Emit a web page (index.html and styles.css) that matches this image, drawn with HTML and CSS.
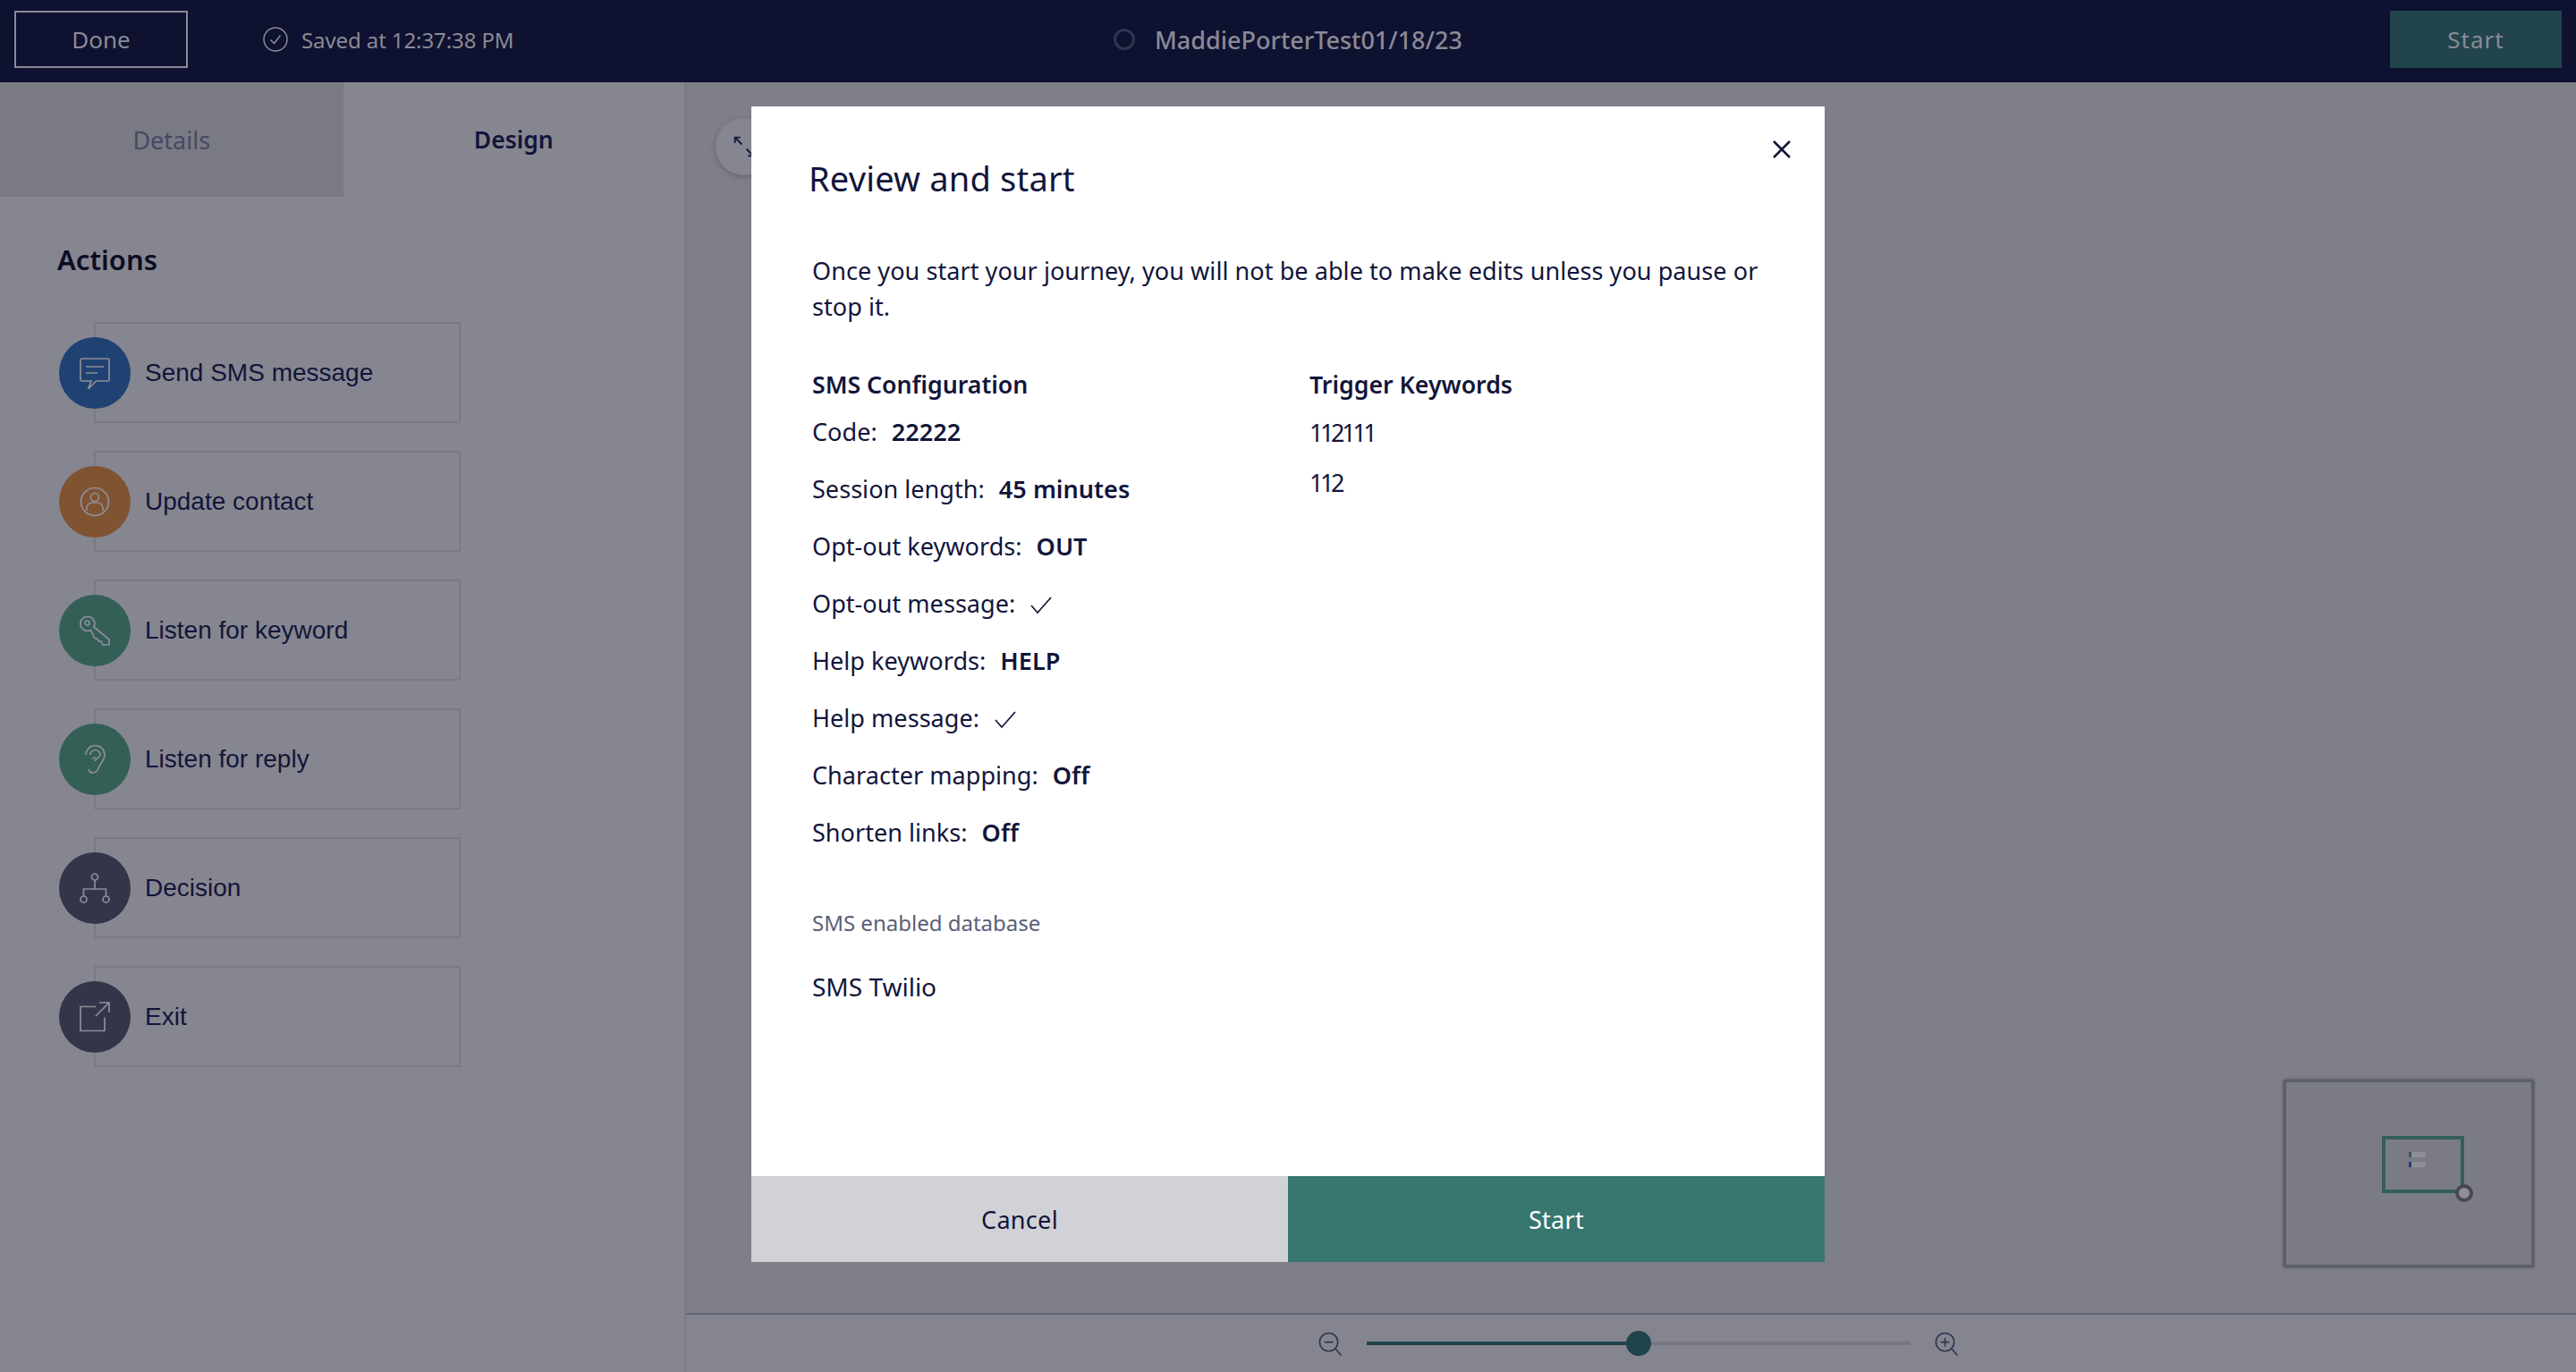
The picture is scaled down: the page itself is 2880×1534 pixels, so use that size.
FILE: index.html
```html
<!DOCTYPE html>
<html lang="en">
<head>
    <meta charset="UTF-8">
    <meta name="viewport" content="width=device-width, initial-scale=1.0">
    <title>Review and start</title>
    <link rel="stylesheet" href="styles.css">
</head>
<body>
    <header class="topbar">
        <button class="done-btn">Done</button>
        <div class="saved">
            <svg class="saved-icon" viewBox="0 0 28 28"><circle cx="14" cy="14" r="13"/><path d="M8.5 14.5l4 4 7-9"/></svg>
            <span>Saved at 12:37:38 PM</span>
        </div>
        <div class="journey-name">
            <span class="status-ring"></span>
            <span>MaddiePorterTest01/18/23</span>
        </div>
        <button class="top-start">Start</button>
    </header>

    <div class="workspace">
        <aside class="sidebar">
            <div class="tabs">
                <div class="tab tab-off">Details</div>
                <div class="tab tab-on">Design</div>
            </div>
            <h2 class="actions-title">Actions</h2>
            <ul class="actions">
                <li class="action">
                    <span class="badge badge-blue">
                        <svg viewBox="0 0 36 36"><path d="M3.5 2h29a1.5 1.5 0 0 1 1.500 1.500v22a1.500 1.500 0 0 1-1.500 1.500h-13l-9 9 3.500-9h-10.500a1.500 1.500 0 0 1-1.500-1.500v-22a1.500 1.500 0 0 1 1.500-1.500z"/><path d="M8 11h20M8 18h13"/></svg>
                    </span>
                    <span class="action-label">Send SMS message</span>
                </li>
                <li class="action">
                    <span class="badge badge-orange">
                        <svg viewBox="0 0 36 36"><circle cx="18" cy="18" r="15.500"/><circle cx="18" cy="13" r="4.500"/><path d="M9 28v-3a6 6 0 0 1 6-6h6a6 6 0 0 1 6 6v3"/></svg>
                    </span>
                    <span class="action-label">Update contact</span>
                </li>
                <li class="action">
                    <span class="badge badge-green">
                        <svg viewBox="0 0 36 36"><path d="M17 14L34 28V34H27L25 30H22L21 27H18L13.500 17.500A8 8 0 1 1 17 14Z"/><circle cx="9.500" cy="9.500" r="2.500"/></svg>
                    </span>
                    <span class="action-label">Listen for keyword</span>
                </li>
                <li class="action">
                    <span class="badge badge-green">
                        <svg viewBox="0 0 36 36"><path d="M8 13a10.500 10.500 0 0 1 21 0c0 6-4 8-6 13-1.500 4-3 7-7 7-3 0-4.500-1.500-5-4"/><path d="M13 13a5.500 5.500 0 0 1 11 0c0 3-5 3.500-6 7"/><path d="M15 17l4-1"/></svg>
                    </span>
                    <span class="action-label">Listen for reply</span>
                </li>
                <li class="action">
                    <span class="badge badge-navy">
                        <svg viewBox="0 0 36 36"><circle cx="18" cy="5.500" r="3.500"/><circle cx="5.500" cy="30.500" r="3.500"/><circle cx="30.500" cy="30.500" r="3.500"/><path d="M18 9v10M5.500 27v-8h25v8"/></svg>
                    </span>
                    <span class="action-label">Decision</span>
                </li>
                <li class="action">
                    <span class="badge badge-navy">
                        <svg viewBox="0 0 36 36"><path d="M19 6.500h-17v27h27v-15"/><path d="M19 17l15-15M23 2h11v11"/></svg>
                    </span>
                    <span class="action-label">Exit</span>
                </li>
            </ul>
        </aside>

        <main class="canvas">
            <button class="fit-btn">
                <svg viewBox="0 0 28 28"><path d="M2 2l9 9M2 9v-7h7M26 26l-9-9M26 19v7h-7"/></svg>
            </button>
            <div class="minimap">
                <div class="minimap-frame">
                    <span class="mini-node mini-green"></span>
                    <span class="mini-node mini-blue"></span>
                    <span class="minimap-handle"></span>
                </div>
            </div>
            <div class="zoombar">
                <svg class="zoom-icon" viewBox="0 0 28 28"><circle cx="12" cy="12" r="10.500"/><path d="M7 12h10M19.500 19.500l7 8"/></svg>
                <div class="slider"><span class="slider-fill"></span><span class="slider-thumb"></span></div>
                <svg class="zoom-icon" viewBox="0 0 28 28"><circle cx="12" cy="12" r="10.500"/><path d="M7 12h10M12 7v10M19.500 19.500l7 8"/></svg>
            </div>
        </main>
    </div>

    <section class="modal">
        <svg class="modal-close" viewBox="0 0 20 20"><path d="M1 1l18 18M19 1L1 19"/></svg>
        <div class="modal-body">
            <h1 class="modal-title">Review and start</h1>
            <p class="modal-intro">Once you start your journey, you will not be able to make edits unless you pause or stop it.</p>
            <div class="summary">
                <div class="summary-col">
                    <h3 class="col-title">SMS Configuration</h3>
                    <div class="row">Code: <b>22222</b></div>
                    <div class="row">Session length: <b>45 minutes</b></div>
                    <div class="row">Opt-out keywords: <b>OUT</b></div>
                    <div class="row">Opt-out message: <svg class="tick" viewBox="0 0 24 20"><path d="M1 10l7 8L23 1"/></svg></div>
                    <div class="row">Help keywords: <b>HELP</b></div>
                    <div class="row">Help message: <svg class="tick" viewBox="0 0 24 20"><path d="M1 10l7 8L23 1"/></svg></div>
                    <div class="row">Character mapping: <b>Off</b></div>
                    <div class="row">Shorten links: <b>Off</b></div>
                </div>
                <div class="keywords-col">
                    <h3 class="col-title">Trigger Keywords</h3>
                    <div class="keyword">112111</div>
                    <div class="keyword">112</div>
                </div>
            </div>
            <div class="db-label">SMS enabled database</div>
            <div class="db-value">SMS Twilio</div>
        </div>
        <div class="modal-footer">
            <button class="btn-cancel">Cancel</button>
            <button class="btn-start">Start</button>
        </div>
    </section>
</body>
</html>
```

FILE: styles.css
```css
* {
    box-sizing: border-box;
}
html, body {
    margin: 0;
    height: 100%;
}
body {
    width: 2880px;
    height: 1534px;
    overflow: hidden;
    position: relative;
    display: flex;
    flex-direction: column;
    font-family: "Noto Sans", "Liberation Sans", sans-serif;
    background-color: #7f7f89;
    color: #12153a;
}
button {
    font-family: inherit;
    border: none;
    padding: 0;
}
svg {
    fill: none;
    stroke: currentColor;
    display: block;
}

/* top bar */
.topbar {
    height: 92px;
    flex: none;
    display: flex;
    align-items: center;
    position: relative;
    padding: 0 16px 4px 16px;
    background-color: #0e1130;
    color: #8a8a96;
}
.done-btn {
    width: 194px;
    height: 64px;
    background: none;
    border: 2px solid #8a8a96;
    color: #8a8a96;
    font-size: 26px;
}
.saved {
    display: flex;
    align-items: center;
    gap: 15px;
    margin-left: 84px;
    font-size: 24px;
    letter-spacing: -0.1px;
}
.saved-icon {
    width: 28px;
    height: 28px;
    stroke-width: 1.500;
}
.journey-name {
    position: absolute;
    left: 1245px;
    top: 0;
    height: 88px;
    display: flex;
    align-items: center;
    gap: 22px;
    font-size: 27px;
    font-weight: 500;
}
.status-ring {
    width: 24px;
    height: 24px;
    border: 3px solid #33354f;
    border-radius: 50%;
}
.top-start {
    margin-left: auto;
    width: 192px;
    height: 64px;
    background-color: #22444b;
    color: #8a8a96;
    font-size: 26px;
    letter-spacing: 1px;
}

/* main area */
.workspace {
    flex: 1;
    display: flex;
    min-height: 0;
}
.sidebar {
    width: 767px;
    flex: none;
    background-color: #868690;
    border-right: 2px solid #7a7a85;
}
.tabs {
    display: flex;
    height: 128px;
}
.tab {
    width: 382px;
    display: flex;
    align-items: center;
    justify-content: center;
    font-size: 27px;
}
.tab-off {
    width: 384px;
    background-color: #797a84;
    color: #464963;
}
.tab-on {
    font-size: 26.5px;
    font-weight: 600;
    color: #12153a;
}
.actions-title {
    margin: 48px 0 48px 64px;
    font-size: 31px;
    line-height: 44px;
    font-weight: 600;
    color: #0b0d24;
}
.actions {
    list-style: none;
    margin: 0;
    padding: 0 0 0 66px;
}
.action {
    display: flex;
    align-items: center;
    height: 113px;
    width: 449px;
    margin-bottom: 31px;
    position: relative;
}
.action::before {
    content: "";
    position: absolute;
    left: 39px;
    right: 0;
    top: 0;
    bottom: 0;
    border: 2px solid #7a7a87;
}
.badge {
    width: 80px;
    height: 80px;
    border-radius: 50%;
    flex: none;
    position: relative;
    display: flex;
    align-items: center;
    justify-content: center;
    color: #8e8e98;
}
.badge svg {
    width: 36px;
    height: 36px;
    stroke-width: 1.700;
}
.badge-blue {
    background-color: #1f4272;
}
.badge-orange {
    background-color: #805333;
}
.badge-green {
    background-color: #335f57;
}
.badge-navy {
    background-color: #343549;
}
.action-label {
    position: relative;
    margin-left: 16px;
    font-family: "Liberation Sans", Arial, sans-serif;
    font-size: 28px;
    color: #12153a;
}

/* canvas */
.canvas {
    flex: 1;
    position: relative;
    background-color: #7f7f89;
}
.fit-btn {
    position: absolute;
    left: 33px;
    top: 40px;
    width: 64px;
    height: 64px;
    border-radius: 50%;
    background-color: #868690;
    box-shadow: 0 2px 6px rgba(40, 40, 60, 0.3);
    color: #1c1e42;
    display: flex;
    align-items: center;
    justify-content: center;
}
.fit-btn svg {
    width: 24px;
    height: 24px;
    stroke-width: 2.500;
}
.minimap {
    position: absolute;
    left: 1786px;
    top: 1115px;
    width: 280px;
    height: 210px;
    border: 3px solid #5d5e6c;
    box-shadow: 0 0 3px #4a4b5a;
    background-color: #7b7b86;
}
.minimap-frame {
    position: absolute;
    left: 107px;
    top: 60px;
    width: 92px;
    height: 64px;
    border: 4px solid #335f5c;
}
.mini-node {
    position: absolute;
    left: 26px;
    width: 19px;
    height: 6px;
    background-color: #8e8e98;
}
.mini-green {
    top: 14px;
    box-shadow: inset 3px 0 0 #335f57;
}
.mini-blue {
    top: 25px;
    box-shadow: inset 3px 0 0 #1f4272;
}
.minimap-handle {
    position: absolute;
    right: -14px;
    bottom: -14px;
    width: 20px;
    height: 20px;
    border: 4px solid #474853;
    border-radius: 50%;
    background-color: #8e8e98;
}
.zoombar {
    position: absolute;
    left: 0;
    right: 0;
    bottom: 0;
    height: 66px;
    border-top: 2px solid #66667a;
    background-color: #858590;
    display: flex;
    align-items: center;
    padding-left: 707px;
    gap: 27px;
    color: #33354f;
}
.zoom-icon {
    width: 27px;
    height: 27px;
    stroke-width: 1.700;
}
.slider {
    width: 608px;
    height: 4px;
    background-color: #767682;
    position: relative;
}
.slider-fill {
    position: absolute;
    left: 0;
    top: 0;
    height: 4px;
    width: 304px;
    background-color: #20444c;
}
.slider-thumb {
    position: absolute;
    left: 290px;
    top: -12px;
    width: 28px;
    height: 28px;
    border-radius: 50%;
    background-color: #20444c;
}

/* review dialog */
.modal {
    position: absolute;
    left: 840px;
    top: 119px;
    width: 1200px;
    height: 1292px;
    background-color: #fff;
    display: flex;
    flex-direction: column;
}
.modal-close {
    position: absolute;
    right: 38px;
    top: 38px;
    width: 20px;
    height: 20px;
    stroke-width: 2.500;
    color: #12153a;
}
.modal-body {
    flex: 1;
    padding: 54px 60px 0 68px;
}
.modal-title {
    margin: 0 0 0 -4px;
    font-size: 38px;
    line-height: 52px;
    font-weight: 400;
    letter-spacing: 0.2px;
}
.modal-intro {
    margin: 58px 0 0;
    font-size: 27px;
    line-height: 40px;
    letter-spacing: 0.07px;
}
.summary {
    display: flex;
    margin-top: 47px;
}
.summary-col {
    flex: 0 0 556px;
}
.keywords-col {
    flex: 1;
}
.col-title {
    margin: 0;
    font-size: 26.7px;
    line-height: 40px;
    font-weight: 600;
}
.row {
    display: flex;
    align-items: center;
    gap: 16px;
    height: 40px;
    margin-top: 24px;
    font-size: 27px;
    letter-spacing: 0.05px;
}
.col-title + .row {
    margin-top: 12px;
}
.row b {
    font-weight: 600;
}
.tick {
    width: 24px;
    height: 20px;
    margin: 6px 0 0 1px;
    stroke-width: 1.700;
}
.keyword {
    height: 40px;
    margin-top: 16px;
    font-size: 27px;
    line-height: 40px;
    letter-spacing: -3.4px;
}
.col-title + .keyword {
    margin-top: 14px;
}
.db-label {
    margin-top: 64px;
    font-size: 24px;
    line-height: 36px;
    color: #5c5e78;
}
.db-value {
    margin-top: 33px;
    font-size: 28px;
    line-height: 40px;
}
.modal-footer {
    height: 96px;
    flex: none;
    display: flex;
}
.modal-footer button {
    flex: 1;
    font-size: 27px;
    letter-spacing: 0.3px;
}
.btn-cancel {
    background-color: #d1d2d7;
    color: #12153a;
}
.btn-start {
    background-color: #37776f;
    color: #fff;
}
```
